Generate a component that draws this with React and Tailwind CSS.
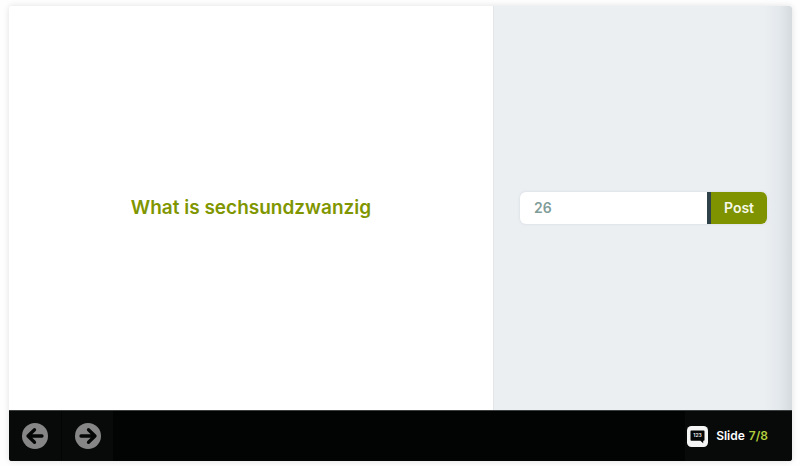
import { useState } from 'react';

function ArrowIcon({ flip = false }) {
    return (
        <svg viewBox="0 0 26 26" className={`size-[26px] ${flip ? 'rotate-180' : ''}`} aria-hidden="true">
            <circle cx="13" cy="13" r="13" fill="#868686" />
            <path
                d="M20 13H6.5M12.5 6.7L6 13l6.5 6.3"
                fill="none"
                stroke="#050707"
                strokeWidth="3.3"
                strokeLinecap="round"
                strokeLinejoin="round"
            />
        </svg>
    );
}

function NumberSlideIcon() {
    return (
        <svg viewBox="0 0 21 21" className="size-[21px]" aria-hidden="true">
            <rect width="21" height="21" rx="4.5" fill="#f5f5f5" />
            <path d="M4.3 4.5h12.400a.8.8 0 0 1 .8.8v8.700a.8.8 0 0 1-.8.8h-.5v2.500l-2.800-2.500H4.300a.8.8 0 0 1-.8-.8V5.300a.8.8 0 0 1 .8-.8z" fill="#050707" />
            <text
                x="10.500"
                y="11.400"
                textAnchor="middle"
                fontSize="5"
                fontWeight="600"
                fill="#f5f5f5"
                fontFamily="Inter, sans-serif"
            >
                123
            </text>
        </svg>
    );
}

export default function App() {
    const [answer, setAnswer] = useState('26');
    const [slide, setSlide] = useState(7);
    const total = 8;

    return (
        <div className="min-h-screen flex bg-[#fefefe] pt-1.5 pb-[5px] pl-[9px] pr-2 font-['Inter','Open_Sans',sans-serif]">
            <div className="flex-1 flex flex-col rounded-[3px] overflow-hidden shadow-[0_0_6px_rgba(0,0,0,0.12)]">
                <main className="flex-1 grid grid-cols-[484fr_299fr]">
                    {/* Question */}
                    <section className="min-w-0 flex items-center justify-center bg-white">
                        <h1 className="text-[19px] leading-7 font-semibold text-[#7f9600]">What is sechsundzwanzig</h1>
                    </section>

                    {/* Answer panel */}
                    <section className="min-w-0 flex items-center border-l border-[#e2e6e9] bg-[linear-gradient(to_left,#d5dadf,#e3e8ec_12px,#ebeff2_28px)] pl-[26px] pr-[25px]">
                        <form
                            onSubmit={(e) => e.preventDefault()}
                            className="w-full h-8 flex rounded-md overflow-hidden bg-white shadow-[0_0_2px_1px_#dfe4e8]"
                        >
                            <input
                                type="text"
                                aria-label="Your answer"
                                value={answer}
                                onChange={(e) => setAnswer(e.target.value)}
                                className="flex-1 min-w-0 px-[14px] pb-0.5 text-[14px] font-semibold text-[#7f9c98] outline-none"
                            />
                            <button
                                type="submit"
                                className="w-[60px] pb-0.5 border-l-4 border-[#2f424a] bg-[#7f9300] text-[14px] font-semibold text-[#f7f9ea]"
                            >
                                Post
                            </button>
                        </form>
                    </section>
                </main>

                {/* Slide controls */}
                <footer className="h-[51px] flex justify-between border-t border-[#3c3f40] bg-[#020404] text-white">
                    <nav className="flex bg-[#080a0a]">
                        <button
                            type="button"
                            aria-label="Previous slide"
                            onClick={() => setSlide(Math.max(1, slide - 1))}
                            className="w-[53px] flex items-center justify-center border-r border-[#030505]"
                        >
                            <ArrowIcon />
                        </button>
                        <button
                            type="button"
                            aria-label="Next slide"
                            onClick={() => setSlide(Math.min(total, slide + 1))}
                            className="w-[51px] flex items-center justify-center"
                        >
                            <ArrowIcon flip />
                        </button>
                    </nav>
                    <div className="flex items-center bg-[#080a0a] pl-0.5 pr-6 text-[12px] font-semibold">
                        <NumberSlideIcon />
                        <span className="ml-2">Slide</span>
                        <span className="ml-1 text-[#b3cf3c]">{slide}/{total}</span>
                    </div>
                </footer>
            </div>
        </div>
    );
}
